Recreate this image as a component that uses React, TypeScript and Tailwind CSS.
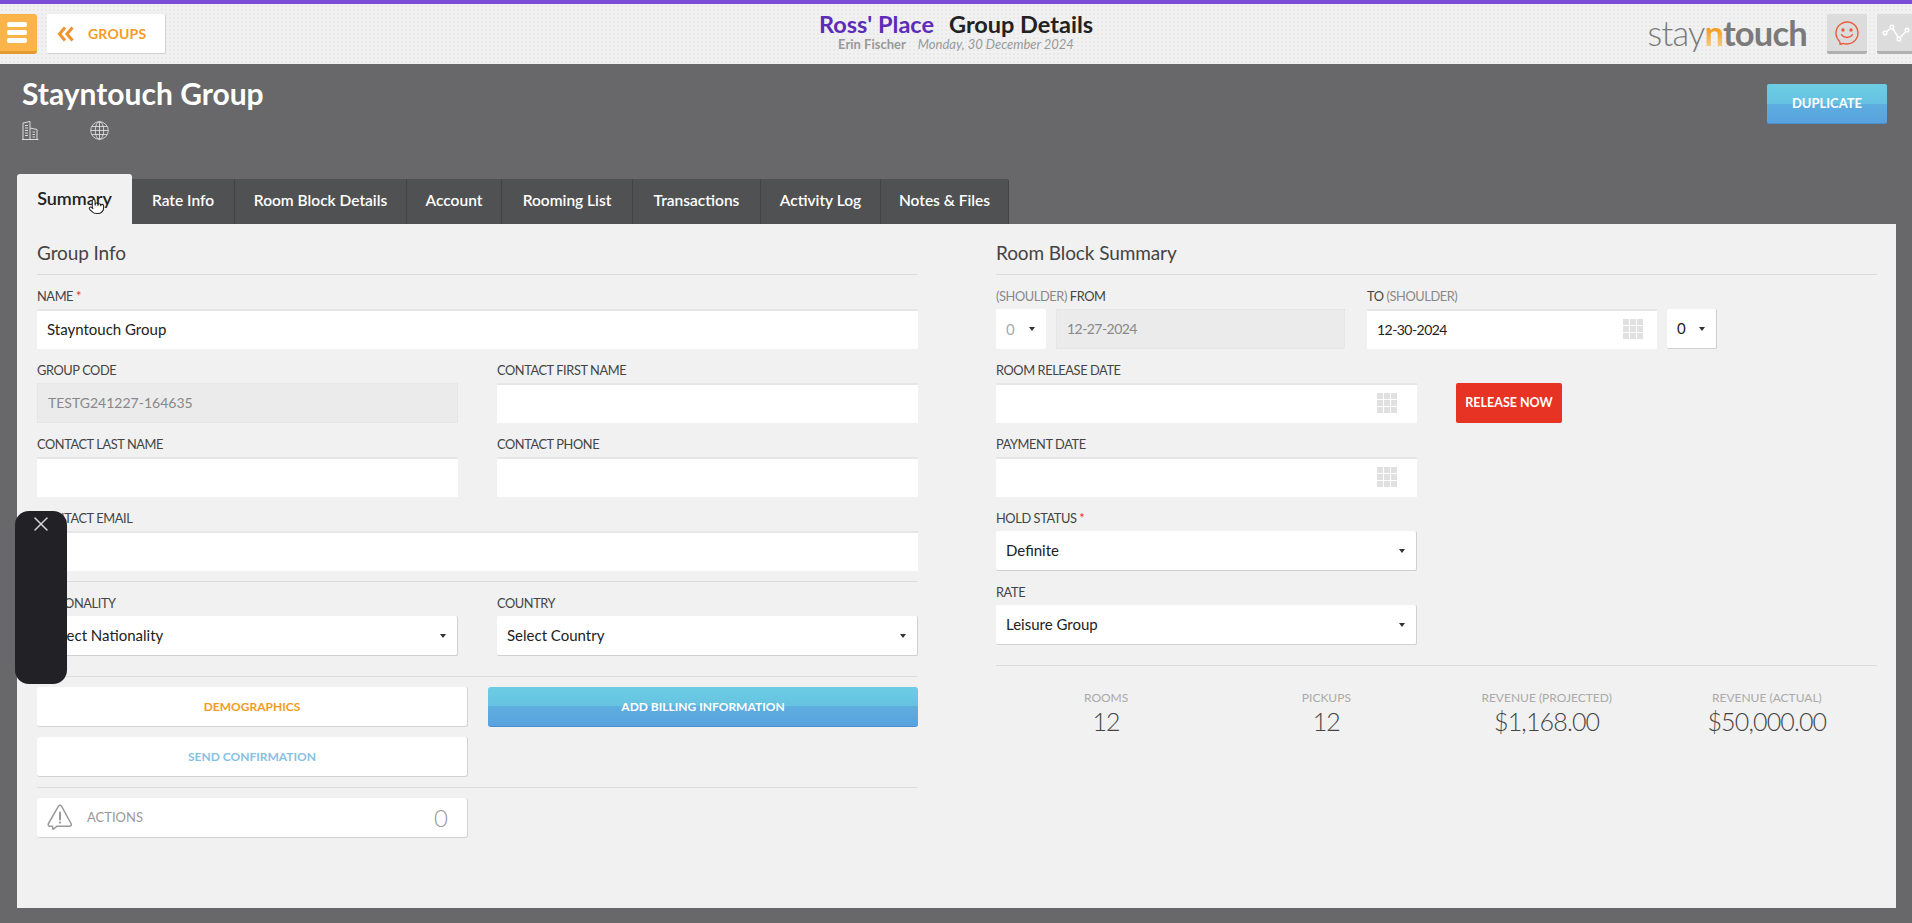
import { Pointer, X } from "lucide-react";

const tabs = [
  { name: "Rate Info", width: "w-[103px]" },
  { name: "Room Block Details", width: "w-[172px]" },
  { name: "Account", width: "w-[95px]" },
  { name: "Rooming List", width: "w-[131px]" },
  { name: "Transactions", width: "w-[128px]" },
  { name: "Activity Log", width: "w-[120px]" },
  { name: "Notes & Files", width: "w-[128px]" },
];

const stats = [
  { label: "ROOMS", value: "12" },
  { label: "PICKUPS", value: "12" },
  { label: "REVENUE (PROJECTED)", value: "$1,168.00" },
  { label: "REVENUE (ACTUAL)", value: "$50,000.00" },
];

function Label({ children }: { children: React.ReactNode }) {
  return <div className="h-5 mb-[3px] text-[12.8px] tracking-[-0.4px] leading-5 text-[#444] uppercase whitespace-nowrap">{children}</div>;
}

function Input({ value, disabled, calendar, date, iconGap }: { value?: string; disabled?: boolean; calendar?: boolean; date?: boolean; iconGap?: string }) {
  return (
    <div
      className={
        disabled
          ? "h-10 px-2.5 pb-[1px] flex items-center text-[14px] text-[#888] bg-[#ebebeb] border border-dotted border-[#e2e2e2]"
          : "h-10 px-2.5 pb-[2px] flex items-center justify-between text-[15px] text-[#222] bg-white border-t-2 border-[#e6e6e6]"
      }
    >
      <span className={date ? "text-[14px] tracking-[-0.55px]" : ""}>{value}</span>
      {calendar && <CalendarGrid gap={iconGap ?? "mr-[4px]"} />}
    </div>
  );
}

function CalendarGrid({ gap }: { gap: string }) {
  return (
    <div className={"grid grid-cols-3 gap-[1px] w-5 h-5 " + gap}>
      {[0, 1, 2, 3, 4, 5, 6, 7, 8].map((i) => (
        <span key={i} className="bg-[#e0e0e0]" />
      ))}
    </div>
  );
}

function Select({ value, muted }: { value: string; muted?: boolean }) {
  return (
    <div
      className={
        "h-10 px-2.5 flex items-center justify-between bg-white rounded-[2px] text-[15px] " +
        (muted ? "text-[#aaa]" : "text-[#222] border-b border-r border-[#d0d0d0]")
      }
    >
      <span>{value}</span>
      <span className="w-0 h-0 border-x-[3px] border-t-[4px] border-x-transparent border-t-[#333] mr-[1px]" />
    </div>
  );
}

function Field({ label, children, className }: { label: React.ReactNode; children: React.ReactNode; className?: string }) {
  return (
    <div className={className}>
      <Label>{label}</Label>
      {children}
    </div>
  );
}

function Required() {
  return <span className="text-[#e53024]"> *</span>;
}

function Heading({ children }: { children: React.ReactNode }) {
  return <h2 className="h-[51px] pt-[18px] text-[19px] tracking-[-0.1px] leading-[22px] text-[#444] border-b border-[#dcdcdc]">{children}</h2>;
}

function WhiteButton({ children, className }: { children: React.ReactNode; className: string }) {
  return (
    <div className={"h-10 flex items-center justify-center bg-white rounded-[3px] border-b border-r border-[#d2d2d2] text-[12px] font-bold " + className}>
      {children}
    </div>
  );
}

function Smiley() {
  return (
    <svg width="26" height="26" viewBox="0 0 26 26" fill="none" stroke="#ea5a3c" strokeWidth="1.4" strokeLinecap="round" strokeLinejoin="round">
      <path d="M6 22.5c-.3-1-.8-1.6-1.6-2.6A11 11 0 1 1 12.5 24c-1.300 0-2.400-.2-3.500-.6-1 .6-2 .9-3 1 .3-.6.1-1.200 0-1.900z" />
      <circle cx="9" cy="10" r="1" fill="#ea5a3c" />
      <circle cx="17" cy="10" r="1" fill="#ea5a3c" />
      <path d="M7.500 14.500c2.500 4 8.500 4 11 0" />
    </svg>
  );
}

function ActivityIcon() {
  return (
    <svg width="28" height="20" viewBox="0 0 28 20" fill="none" stroke="#fff" strokeWidth="1.500">
      <path d="M3 10l7-6 7 12 8-9" />
      <circle cx="3" cy="10" r="1.800" fill="#dcdcdc" />
      <circle cx="10" cy="4" r="1.800" fill="#dcdcdc" />
      <circle cx="17" cy="16" r="1.800" fill="#dcdcdc" />
      <circle cx="25" cy="7" r="1.800" fill="#dcdcdc" />
    </svg>
  );
}

function BuildingIcon() {
  return (
    <svg width="17" height="19" viewBox="0 0 17 19" fill="none" stroke="#e8e8e8" strokeWidth="0.900">
      <path d="M1 18.500V2l7-1.500v18M8 7l7 1.500v10M0 18.500h16.500" />
      <path d="M3 4.500h3M3 7h3M3 9.500h3M3 12h3M3 14.500h3M10.500 11h2.500M10.500 13.500h2.500M10.500 16h2.500" />
    </svg>
  );
}

function GlobeIcon() {
  return (
    <svg width="19" height="19" viewBox="0 0 19 19" fill="none" stroke="#e8e8e8" strokeWidth="0.800">
      <circle cx="9.500" cy="9.500" r="8.800" />
      <ellipse cx="9.500" cy="9.500" rx="4.200" ry="8.800" />
      <path d="M9.500 0.700v17.600M0.700 9.500h17.600M1.800 5.500h15.400M1.800 13.500h15.400" />
    </svg>
  );
}

function WarningIcon() {
  return (
    <svg width="26" height="27" viewBox="0 0 26 27" fill="none" stroke="#9a9a9a" strokeWidth="1.500" strokeLinejoin="round" strokeLinecap="round">
      <path d="M11.500 2.200L1.500 19.500c-.8 1.400 0 2.700 1.500 2.700h2.500l.5 3.300 4-3.300h12.500c1.500 0 2.300-1.300 1.500-2.700L14.500 2.200c-.8-1.300-2.200-1.300-3 0z" />
      <path d="M13 8.500v7" strokeWidth="2" />
      <path d="M13 18.500v.3" strokeWidth="2" />
    </svg>
  );
}

export default function App() {
  return (
    <div className="relative h-[923px] overflow-hidden bg-[#68686a] font-['Lato','Liberation_Sans',sans-serif]">
      {/* Header */}
      <header className="h-16 border-t-4 border-[#7b4cd6] bg-[#f1f1f1] bg-[radial-gradient(#e9e9e9_1px,transparent_1px)] bg-[length:4px_4px] grid grid-cols-3">
        <div className="flex items-start pt-2.5 gap-[10px]">
          <div className="w-[37px] h-10 bg-[#fbb44a] border-b-[3px] border-[#e39a32] rounded-r-[3px] flex flex-col justify-center gap-[3px] pl-[7px]">
            <span className="w-5 h-[5px] rounded-[2px] bg-white" />
            <span className="w-5 h-[5px] rounded-[2px] bg-white" />
            <span className="w-5 h-[5px] rounded-[2px] bg-white" />
          </div>
          <div className="w-[119px] h-10 bg-white border-b border-r border-[#d2d2d2] rounded-[2px] flex items-center pl-[10px] text-[14px] font-bold text-[#f59b23]">
            <svg width="18" height="16" viewBox="0 0 18 16" fill="none" stroke="#f2922a" strokeWidth="3">
              <path d="M8 1.500L2.500 8 8 14.500M15.500 1.500L10 8l5.500 6.500" />
            </svg>
            <span className="ml-[13px] tracking-[0.2px]">GROUPS</span>
          </div>
        </div>
        <div className="flex flex-col items-center pt-[8px]">
          <div className="flex gap-[15px] text-[23.500px] leading-[24px] font-bold whitespace-nowrap">
            <span className="text-[#5b2db8]">Ross' Place</span>
            <span className="text-[#222]">Group Details</span>
          </div>
          <div className="flex gap-[12px] text-[13px] leading-[16px] text-[#999] whitespace-nowrap">
            <span className="font-bold">Erin Fischer</span>
            <span className="italic">Monday, 30 December 2024</span>
          </div>
        </div>
        <div className="flex justify-end items-start pt-2.5">
          <div className="text-[34.500px] leading-[38px] text-[#7a7a7a] mr-5 whitespace-nowrap tracking-[-0.8px]">
            <span className="font-light">stay</span>
            <span className="font-bold text-transparent bg-clip-text bg-[linear-gradient(#f39a1f_40%,#fbd9a6)]">n</span>
            <span className="font-bold">touch</span>
          </div>
          <div className="w-10 h-10 bg-[#dcdcdc] border-b-[3px] border-[#b0b0b0] rounded-[2px] flex items-center justify-center">
            <Smiley />
          </div>
          <div className="w-[35px] h-10 ml-[10px] bg-[#dcdcdc] border-b-[3px] border-[#b0b0b0] rounded-l-[2px] overflow-hidden flex items-center pl-[5px]">
            <ActivityIcon />
          </div>
        </div>
      </header>

      {/* Group title */}
      <div className="h-[110px] pl-[22px] pr-[25px] flex justify-between">
        <div>
          <h1 className="pt-[11px] text-[30px] leading-[36px] font-bold text-white">Stayntouch Group</h1>
          <div className="flex items-center mt-[10px] gap-[51px]">
            <BuildingIcon />
            <GlobeIcon />
          </div>
        </div>
        <div className="mt-[20px] w-[120px] h-10 flex items-center justify-center rounded-[2px] text-[13px] font-bold text-white bg-[linear-gradient(#6ccde2,#65c2e2_50%,#5eaee0_50%,#58a2df)] border-b border-[#4a8ec9]">
          DUPLICATE
        </div>
      </div>

      {/* Tabs */}
      <div className="pl-[17px] flex items-end h-[50px]">
        <div className="w-[115px] h-[50px] bg-[#f1f1f1] rounded-t-[3px] flex items-center justify-center text-[18px] font-semibold text-[#222] pb-[2px]">
          Summary
        </div>
        {tabs.map((t, i) => (
          <div
            key={t.name}
            className={
              t.width +
              " h-[45px] pb-[2px] bg-[#505153] border-r border-[#434446] flex items-center justify-center text-[15.5px] font-semibold text-white " +
              (i === tabs.length - 1 ? "rounded-tr-[3px]" : "")
            }
          >
            {t.name}
          </div>
        ))}
      </div>

      {/* Panel */}
      <main className="ml-[17px] mr-4 h-[684px] bg-[#f1f1f1] pl-5 pr-[19px] grid grid-cols-[881px_881px] gap-x-[78px]">
        <section>
          <Heading>Group Info</Heading>
          <div className="pt-[11px]">
            <Field label={<>Name<Required /></>}>
              <Input value="Stayntouch Group" />
            </Field>
            <div className="grid grid-cols-2 gap-x-[39px] mt-[11px]">
              <Field label="Group Code">
                <Input value="TESTG241227-164635" disabled />
              </Field>
              <Field label="Contact First Name">
                <Input />
              </Field>
            </div>
            <div className="grid grid-cols-2 gap-x-[39px] mt-[11px]">
              <Field label="Contact Last Name">
                <Input />
              </Field>
              <Field label="Contact Phone">
                <Input />
              </Field>
            </div>
            <Field label="Contact Email" className="mt-[11px]">
              <Input />
            </Field>
            <div className="mt-[10px] border-t border-[#dcdcdc] pt-[11px] grid grid-cols-2 gap-x-[39px]">
              <Field label="Nationality">
                <Select value="Select Nationality" />
              </Field>
              <Field label="Country">
                <Select value="Select Country" />
              </Field>
            </div>
            <div className="mt-5 border-t border-[#dcdcdc] pt-[10px] grid grid-cols-[431px_430px] gap-x-5 gap-y-[10px]">
              <WhiteButton className="text-[#f59b23]">DEMOGRAPHICS</WhiteButton>
              <div className="h-10 flex items-center justify-center rounded-[3px] text-[12px] font-bold text-white bg-[linear-gradient(#6ccde2,#65c2e2_50%,#5eaee0_50%,#58a2df)] border-b border-[#4a8ec9]">
                ADD BILLING INFORMATION
              </div>
              <WhiteButton className="text-[#85c1e3]">SEND CONFIRMATION</WhiteButton>
            </div>
            <div className="mt-[10px] border-t border-[#dcdcdc] pt-[10px]">
              <div className="w-[431px] h-10 px-[10px] flex items-center bg-white rounded-[3px] border-b border-r border-[#d2d2d2]">
                <WarningIcon />
                <span className="ml-[14px] text-[13px] text-[#999]">ACTIONS</span>
                <span className="ml-auto mr-[10px] text-[24px] tracking-[-1px] font-light text-[#999]">0</span>
              </div>
            </div>
          </div>
        </section>

        <section>
          <Heading>Room Block Summary</Heading>
          <div className="pt-[11px]">
            <div className="flex">
              <div className="w-[50px] mr-[10px]">
                <Label>
                  <span className="text-[#888]">(Shoulder)</span> From
                </Label>
                <Select value="0" muted />
              </div>
              <div className="w-[289px] pt-[23px] mr-[22px]">
                <Input value="12-27-2024" disabled date />
              </div>
              <div className="w-[290px] mr-[10px]">
                <Label>
                  To <span className="text-[#888]">(Shoulder)</span>
                </Label>
                <Input value="12-30-2024" calendar date iconGap="mr-[4px]" />
              </div>
              <div className="w-[50px] pt-[23px]">
                <Select value="0" />
              </div>
            </div>
            <div className="flex items-end gap-[39px] mt-[11px]">
              <Field label="Room Release Date" className="w-[421px]">
                <Input calendar iconGap="mr-[10px]" />
              </Field>
              <div className="w-[106px] h-10 flex items-center justify-center rounded-[2px] bg-[#e63323] text-[12.500px] font-bold text-white">
                RELEASE NOW
              </div>
            </div>
            <Field label="Payment Date" className="w-[421px] mt-[11px]">
              <Input calendar iconGap="mr-[10px]" />
            </Field>
            <Field label={<>Hold Status<Required /></>} className="w-[421px] mt-[11px]">
              <Select value="Definite" />
            </Field>
            <Field label="Rate" className="w-[421px] mt-[11px]">
              <Select value="Leisure Group" />
            </Field>
            <div className="mt-5 border-t border-[#dcdcdc] pt-[24px] grid grid-cols-4">
              {stats.map((s) => (
                <div key={s.label} className="flex flex-col items-center">
                  <span className="text-[12px] leading-4 text-[#aaa] whitespace-nowrap">{s.label}</span>
                  <span className="text-[25px] tracking-[-0.85px] leading-[30px] font-light text-[#444]">{s.value}</span>
                </div>
              ))}
            </div>
          </div>
        </section>
      </main>

      {/* Cursor over the active tab */}
      <Pointer size={17} strokeWidth={1.5} className="absolute left-[88px] top-[198px] text-[#222] fill-white" />

      {/* Floating widget */}
      <div className="absolute left-[15px] top-[511px] w-[52px] h-[173px] rounded-[14px] bg-[#222226] flex justify-center pt-[1px]">
        <X size={24} strokeWidth={1.5} className="text-[#d8d8d8]" />
      </div>
    </div>
  );
}
